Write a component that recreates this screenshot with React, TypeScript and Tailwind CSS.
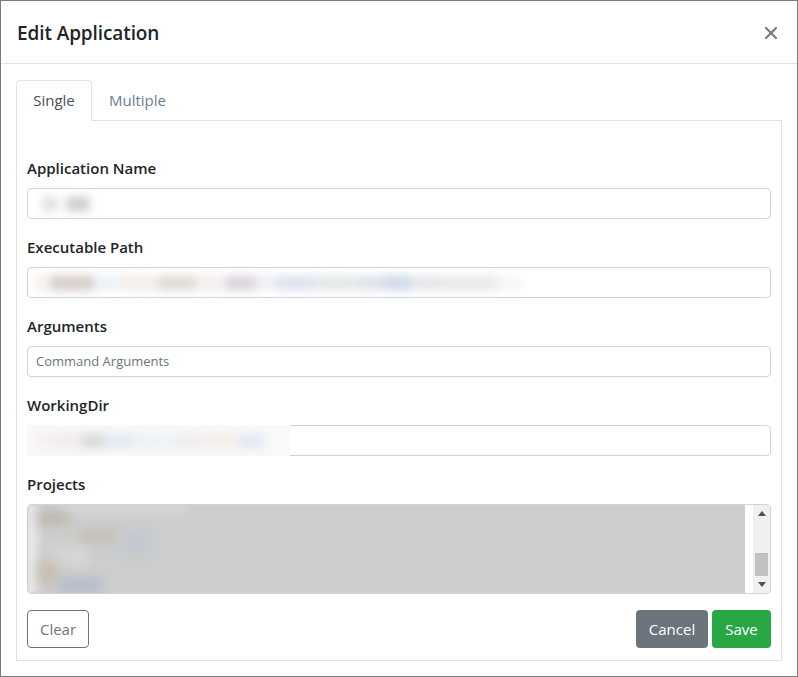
import React from 'react'

type Blob = { w: number; c: string; o?: number }

function Smudge({ blobs, className }: { blobs: Blob[]; className?: string }) {
  return (
    <div className={`flex items-center blur-[4px] ${className ?? ''}`}>
      {blobs.map((b, i) => (
        <span
          key={i}
          className="h-[16px] rounded-sm shrink-0"
          style={{ width: b.w, backgroundColor: b.c, opacity: b.o ?? 1 }}
        />
      ))}
    </div>
  )
}

function Label({ children }: { children: React.ReactNode }) {
  return <label className="block text-[15px] leading-6 font-semibold text-[#212529] mb-2">{children}</label>
}

function Field({ label, children }: { label: string; children: React.ReactNode }) {
  return (
    <div className="mb-4">
      <Label>{label}</Label>
      {children}
    </div>
  )
}

export default function App() {
  return (
    <div className="w-[798px] h-[677px] bg-white border border-[#7a7a7a] flex flex-col text-[#212529] font-['Open_Sans',sans-serif]">
      <div className="h-[63px] shrink-0 flex items-center justify-between pl-4 pr-[18px] pt-[2px] border-b border-[#dee2e6]">
        <h5 className="text-[19px] font-semibold tracking-[-0.1px] text-[#212529]">Edit Application</h5>
        <button className="w-4 h-4 flex items-center justify-center" aria-label="Close">
          <svg width="12" height="12" viewBox="0 0 12 12">
            <path d="M1 1 L11 11 M11 1 L1 11" stroke="#7b7b7b" strokeWidth="2.2" strokeLinecap="square" />
          </svg>
        </button>
      </div>

      <div className="flex-1 flex flex-col px-[15px] pt-4 pb-[15px]">
        <div className="flex border-b border-[#dee2e6] h-[41px]">
          <div className="w-[76px] h-[41px] flex items-center justify-center border border-[#dee2e6] border-b-white rounded-t-[4px] text-[15px] text-[#495057] bg-white">
            Single
          </div>
          <div className="pl-[17px] pr-4 h-[41px] flex items-center text-[15px] text-[#6b7d93]">Multiple</div>
        </div>

        <div className="flex-1 flex flex-col border border-t-0 border-[#dee2e6] px-[10px] pt-[35px]">
          <Field label="Application Name">
            <div className="h-[31px] border border-[#ced4da] rounded-[4px] flex items-center px-2 overflow-hidden">
              <Smudge
                blobs={[
                  { w: 6, c: '#ffffff' },
                  { w: 16, c: '#e2e2e2' },
                  { w: 8, c: '#ffffff' },
                  { w: 24, c: '#d2d2d2' },
                ]}
              />
            </div>
          </Field>

          <Field label="Executable Path">
            <div className="h-[31px] border border-[#ced4da] rounded-[4px] flex items-center px-[6px] overflow-hidden">
              <Smudge
                blobs={[
                  { w: 16, c: '#f6f2ec' },
                  { w: 44, c: '#d8d1cd' },
                  { w: 28, c: '#eef2f7' },
                  { w: 36, c: '#f3efe9' },
                  { w: 38, c: '#e2dcd6' },
                  { w: 30, c: '#f3efef' },
                  { w: 30, c: '#ddd6dc' },
                  { w: 20, c: '#eef1f5' },
                  { w: 40, c: '#dfe5ee' },
                  { w: 38, c: '#e4eae8' },
                  { w: 28, c: '#e0e5ec' },
                  { w: 30, c: '#d3dce9' },
                  { w: 36, c: '#e8e9ec' },
                  { w: 50, c: '#eceaeb' },
                  { w: 24, c: '#f7f7f8' },
                ]}
              />
            </div>
          </Field>

          <Field label="Arguments">
            <div className="h-[31px] border border-[#ced4da] rounded-[4px] flex items-center px-2 text-[13px] text-[#6c757d]">
              Command Arguments
            </div>
          </Field>

          <Field label="WorkingDir">
            <div className="relative h-[31px] border border-[#ced4da] rounded-[4px] flex items-center">
              <div className="absolute -left-px -top-px -bottom-px w-[263px] bg-[#f9f9f9] flex items-center pl-2 overflow-hidden">
                <Smudge
                  blobs={[
                    { w: 18, c: '#f5f0ee' },
                    { w: 28, c: '#f1eceb' },
                    { w: 24, c: '#dcdcdc' },
                    { w: 30, c: '#e4ebf3' },
                    { w: 36, c: '#eef2f6' },
                    { w: 32, c: '#f0eeee' },
                    { w: 36, c: '#f4eeea' },
                    { w: 26, c: '#e3eaf3' },
                  ]}
                />
              </div>
            </div>
          </Field>

          <div>
            <Label>Projects</Label>
            <div className="h-[90px] border border-[#ced4da] rounded-[4px] flex overflow-hidden">
              <div className="relative flex-1 bg-[#cecece] overflow-hidden">
                <div className="absolute left-0 top-0 bottom-0 w-[16px] bg-gradient-to-r from-[#f0f0f0] to-[#cecece] blur-[2px]" />
                <div className="absolute left-[28px] top-[-2px] w-[130px] h-[10px] bg-[#d8d8d8] blur-[5px]" />
                <div className="absolute left-[10px] top-[6px] w-[30px] h-[14px] bg-[#bdb6ac] blur-[6px]" />
                <div className="absolute left-[50px] top-[24px] w-[40px] h-[14px] bg-[#c6bdb2] blur-[6px]" />
                <div className="absolute left-[88px] top-[22px] w-[36px] h-[30px] bg-[#c4c8ce] blur-[7px]" />
                <div className="absolute left-[20px] top-[42px] w-[40px] h-[20px] bg-[#d6d6d6] blur-[6px]" />
                <div className="absolute left-[10px] top-[55px] w-[20px] h-[24px] bg-[#c8bfb2] blur-[6px]" />
                <div className="absolute left-[30px] top-[72px] w-[44px] h-[16px] bg-[#b4bccb] blur-[6px]" />
              </div>
              <div className="w-[8px] bg-white" />
              <div className="w-[17px] bg-[#f0f0f0] flex flex-col items-center justify-between py-[6px]">
                <svg width="8" height="5" viewBox="0 0 8 5">
                  <path d="M0 5 L4 0 L8 5 Z" fill="#505050" />
                </svg>
                <div className="flex-1 w-full flex flex-col justify-end pb-[6px] pt-[30px]">
                  <div className="mx-[2px] h-[23px] bg-[#c1c1c1]" />
                </div>
                <svg width="8" height="5" viewBox="0 0 8 5">
                  <path d="M0 0 L8 0 L4 5 Z" fill="#505050" />
                </svg>
              </div>
            </div>
          </div>

          <div className="flex items-center justify-between mt-4">
            <button className="w-[62px] h-[38px] border border-[#6c757d] rounded-[4px] text-[15px] text-[#6c757d] bg-white">
              Clear
            </button>
            <div className="flex gap-1">
              <button className="w-[72px] h-[38px] rounded-[4px] text-[15px] text-white bg-[#6c757d]">Cancel</button>
              <button className="w-[59px] h-[38px] rounded-[4px] text-[15px] text-white bg-[#28a745]">Save</button>
            </div>
          </div>
        </div>
      </div>
    </div>
  )
}
